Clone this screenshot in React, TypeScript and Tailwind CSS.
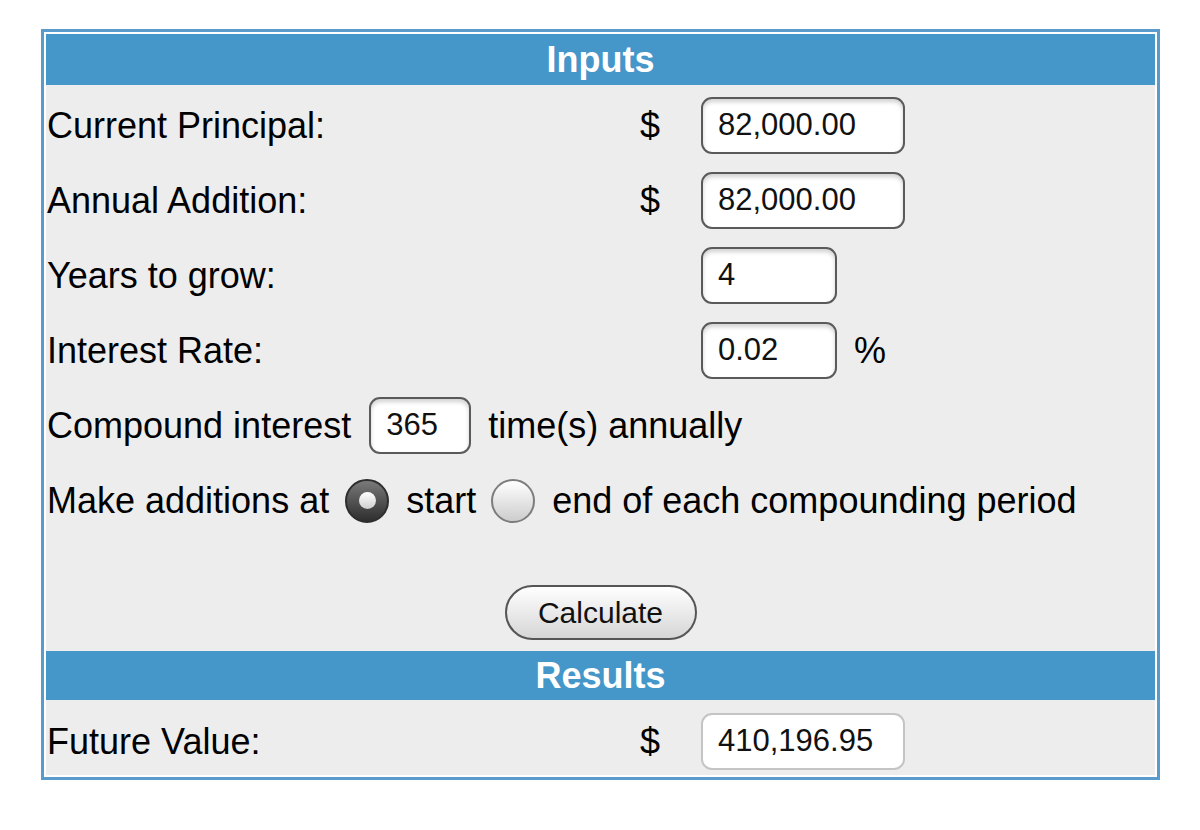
import React from 'react';

const FONT = { fontFamily: '"Liberation Sans", Arial, Helvetica, sans-serif' };

interface FieldProps {
  value: string;
  width: string;
  readOnly?: boolean;
}

const Field: React.FC<FieldProps> = ({ value, width, readOnly = false }) => (
  <div
    className={`h-[57px] ${width} flex items-center pl-[15px] rounded-[11px] bg-white text-[31px] text-[#111] ${
      readOnly
        ? 'border-2 border-[#c4c4c4]'
        : 'border-2 border-[#5a5a5a] shadow-[inset_0_3px_4px_rgba(0,0,0,0.18)]'
    }`}
  >
    {value}
  </div>
);

const Radio: React.FC<{ checked?: boolean }> = ({ checked = false }) =>
  checked ? (
    <div className="w-[44px] h-[44px] rounded-full border-2 border-[#2e2e2e] bg-gradient-to-b from-[#7a7a7a] to-[#2f2f2f] flex items-center justify-center flex-shrink-0">
      <div className="w-[17px] h-[17px] rounded-full bg-gradient-to-b from-white to-[#cfcfcf]" />
    </div>
  ) : (
    <div className="w-[44px] h-[44px] rounded-full border-2 border-[#7d7d7d] bg-gradient-to-b from-white to-[#cdcdcd] flex-shrink-0" />
  );

const Header: React.FC<{ title: string; h: string }> = ({ title, h }) => (
  <div className={`${h} bg-[#4596c9] flex items-center justify-center text-white font-bold text-[36px]`}>
    {title}
  </div>
);

const rows = [
  { label: 'Current Principal:', dollar: true, value: '82,000.00', w: 'w-[204px]' },
  { label: 'Annual Addition:', dollar: true, value: '82,000.00', w: 'w-[204px]' },
  { label: 'Years to grow:', dollar: false, value: '4', w: 'w-[136px]' },
  { label: 'Interest Rate:', dollar: false, value: '0.02', w: 'w-[136px]', pct: true },
];

export default function App() {
  return (
    <div className="w-[1200px] h-[830px] bg-white pt-[29px] pl-[41px] text-black" style={FONT}>
      <div className="w-[1119px] border-[3px] border-[#5b9bcb]">
        <div className="border-2 border-white bg-[#ededed]">
          <Header title="Inputs" h="h-[51px]" />

          <div className="pt-[3px]">
            {rows.map((r) => (
              <div key={r.label} className="h-[75px] flex items-center text-[36px]">
                <div className="w-[594px] pl-px">{r.label}</div>
                <div className="w-[61px]">{r.dollar ? '$' : ''}</div>
                <Field value={r.value} width={r.w} />
                {r.pct && <div className="ml-[17px]">%</div>}
              </div>
            ))}

            <div className="h-[75px] flex items-center text-[36px] pl-px">
              <span>Compound interest</span>
              <div className="ml-[18px]">
                <Field value="365" width="w-[102px]" />
              </div>
              <span className="ml-[17px]">time(s) annually</span>
            </div>

            <div className="h-[75px] flex items-center text-[36px] pl-px">
              <span>Make additions at</span>
              <div className="ml-[16px]">
                <Radio checked />
              </div>
              <span className="ml-[17px]">start</span>
              <div className="ml-[15px]">
                <Radio />
              </div>
              <span className="ml-[17px]">end of each compounding period</span>
            </div>

            <div className="h-[113px] flex justify-center pt-[47px]">
              <button className="w-[192px] h-[55px] rounded-full border-2 border-[#555] bg-gradient-to-b from-white to-[#d6d6d6] text-[30px] text-[#111] flex items-center justify-center">
                Calculate
              </button>
            </div>
          </div>

          <Header title="Results" h="h-[49px]" />

          <div className="h-[75px] flex items-start pt-[13px] text-[36px]">
            <div className="w-[594px] pl-px h-[57px] flex items-center">Future Value:</div>
            <div className="w-[61px] h-[57px] flex items-center">$</div>
            <Field value="410,196.95" width="w-[204px]" readOnly />
          </div>
        </div>
      </div>
    </div>
  );
}
